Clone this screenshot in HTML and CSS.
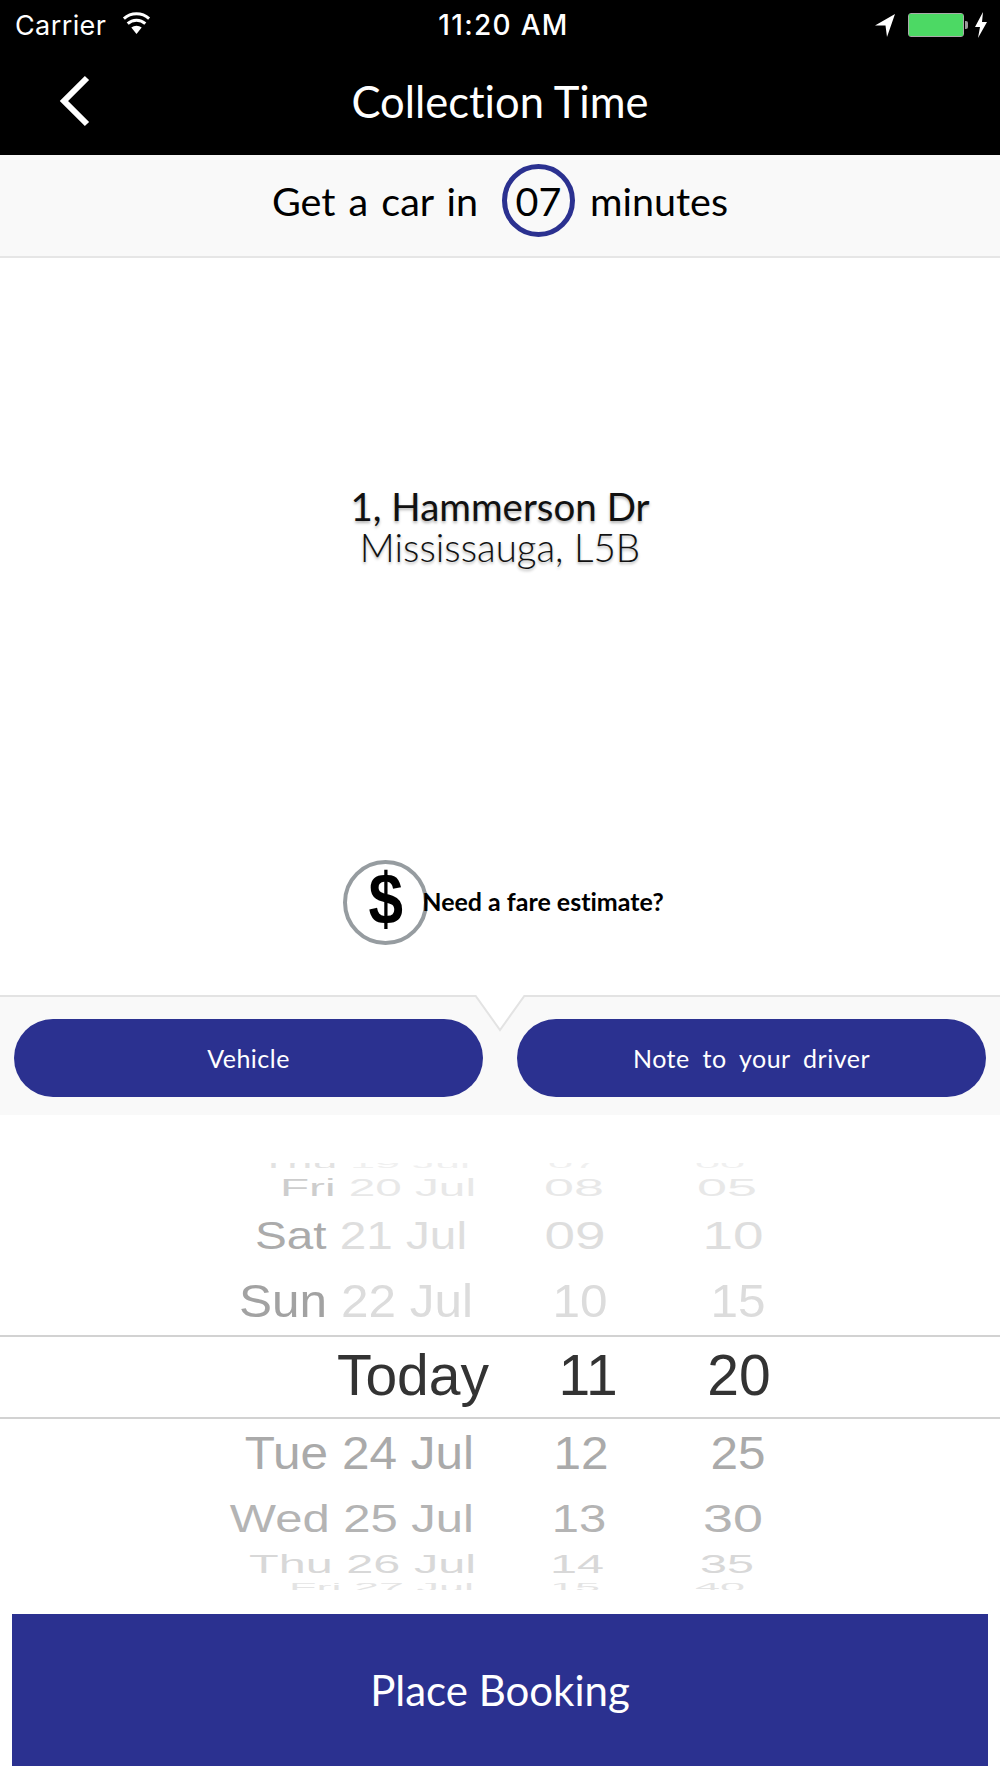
FILE: index.html
```html
<!DOCTYPE html>
<html lang="en">
<head>
    <meta charset="UTF-8">
    <meta name="viewport" content="width=device-width, initial-scale=1.0">
    <title>Collection Time</title>
    <link rel="stylesheet" href="styles.css">
</head>
<body>
    <div class="status-bar">
        <div class="status-left">
            <span class="carrier">Carrier</span>
            <svg class="wifi" width="31" height="24" viewBox="0 0 30 24">
                <path d="M15 23 9.8 16.6a8 8 0 0 1 10.4 0z" fill="#fff"/>
                <path d="M6.2 12.6a13 13 0 0 1 17.6 0" fill="none" stroke="#fff" stroke-width="3"/>
                <path d="M2.4 7.6a19 19 0 0 1 25.2 0" fill="none" stroke="#fff" stroke-width="3"/>
            </svg>
        </div>
        <div class="status-time">11:20 AM</div>
        <div class="status-right">
            <svg width="20" height="24" viewBox="0 0 20 24"><path d="M20 1 0 12.5h10.5L12 24z" fill="#fff"/></svg>
            <div class="battery"><div class="battery-fill"></div></div>
            <svg width="12" height="26" viewBox="0 0 12 26"><path d="M8 0 0 15h5l-2 11 9-16H7z" fill="#fff"/></svg>
        </div>
    </div>

    <header class="nav-bar">
        <svg class="back" width="34" height="52" viewBox="0 0 34 52">
            <path d="M29 3 6 26l23 23" fill="none" stroke="#fff" stroke-width="6"/>
        </svg>
        <h1>Collection Time</h1>
    </header>

    <div class="eta-bar">
        <span>Get a car in</span>
        <span class="eta-circle">07</span>
        <span>minutes</span>
    </div>

    <main class="map-area">
        <div class="address">
            <div class="address-street">1, Hammerson Dr</div>
            <div class="address-city">Mississauga, L5B</div>
        </div>
        <div class="fare">
            <div class="fare-icon"><span>$</span></div>
            <span class="fare-text">Need a fare estimate?</span>
        </div>
    </main>

    <section class="options">
        <svg class="notch" width="52" height="38" viewBox="0 0 52 38">
            <path d="M1 0 26 35 51 0z" fill="#fff"/>
            <path d="M1 0 26 35 51 0" fill="none" stroke="#e3e3e3" stroke-width="2"/>
        </svg>
        <button class="pill-btn">Vehicle</button>
        <button class="pill-btn">Note to your driver</button>
    </section>

    <section class="picker">
        <div class="wheel">
            <div class="row row-a"><span class="date"><b>Thu</b> 19 Jul</span><span class="hour">07</span><span class="min">00</span></div>
            <div class="row row-b"><span class="date"><b>Fri</b> 20 Jul</span><span class="hour">08</span><span class="min">05</span></div>
            <div class="row row-c"><span class="date"><b>Sat</b> 21 Jul</span><span class="hour">09</span><span class="min">10</span></div>
            <div class="row row-d"><span class="date"><b>Sun</b> 22 Jul</span><span class="hour">10</span><span class="min">15</span></div>
            <div class="row row-now"><span class="date">Today</span><span class="hour">11</span><span class="min">20</span></div>
            <div class="row row-e"><span class="date">Tue 24 Jul</span><span class="hour">12</span><span class="min">25</span></div>
            <div class="row row-f"><span class="date">Wed 25 Jul</span><span class="hour">13</span><span class="min">30</span></div>
            <div class="row row-g"><span class="date">Thu 26 Jul</span><span class="hour">14</span><span class="min">35</span></div>
            <div class="row row-h"><span class="date">Fri 27 Jul</span><span class="hour">15</span><span class="min">40</span></div>
        </div>
    </section>

    <div class="booking-wrap">
        <button class="booking-btn">Place Booking</button>
    </div>
</body>
</html>
```

FILE: styles.css
```css
* {
    margin: 0;
    padding: 0;
    box-sizing: border-box;
}

body {
    width: 1000px;
    height: 1778px;
    overflow: hidden;
    background: #fff;
    font-family: "Lato", sans-serif;
    font-variant-ligatures: none;
    display: flex;
    flex-direction: column;
}

.status-bar {
    height: 50px;
    background: #000;
    color: #fff;
    font-family: "Inter", sans-serif;
    font-size: 27px;
    display: grid;
    grid-template-columns: 1fr auto 1fr;
    align-items: center;
    padding: 0 13px 0 15px;
}

.status-left {
    display: flex;
    align-items: center;
    gap: 15px;
}

.carrier {
    letter-spacing: 0.4px;
}

.wifi {
    margin-top: -4px;
}

.status-time {
    margin-left: 5px;
    font-size: 28px;
    font-weight: 500;
    letter-spacing: 1.3px;
}

.status-right {
    display: flex;
    justify-content: flex-end;
    align-items: center;
    gap: 8px;
}

.battery {
    width: 56px;
    height: 24px;
    margin-left: 5px;
    margin-right: 3px;
    border: 1px solid #aaa;
    border-radius: 3px;
    background: #000;
    position: relative;
}

.battery::after {
    content: "";
    position: absolute;
    right: -5px;
    top: 7px;
    width: 3px;
    height: 8px;
    background: #999;
    border-radius: 0 2px 2px 0;
}

.battery-fill {
    height: 100%;
    background: #4cd964;
}

.nav-bar {
    height: 105px;
    background: #000;
    color: #fff;
    display: flex;
    align-items: center;
    justify-content: center;
    position: relative;
}

.nav-bar h1 {
    font-size: 43.5px;
    font-weight: 400;
    margin-bottom: 4px;
}

.back {
    position: absolute;
    left: 58px;
    top: 25px;
}

.eta-bar {
    height: 103px;
    padding-bottom: 10px;
    background: #f9f9f9;
    border-bottom: 2px solid #e6e6e6;
    display: flex;
    align-items: center;
    justify-content: center;
    gap: 15px;
    font-size: 39.5px;
    word-spacing: 3px;
    color: #000;
}

.eta-circle {
    width: 73px;
    height: 73px;
    margin-left: 9px;
    border: 5px solid #2b3190;
    border-radius: 50%;
    display: flex;
    align-items: center;
    justify-content: center;
}

.map-area {
    height: 737px;
    background: #fff;
    display: flex;
    flex-direction: column;
    align-items: center;
    padding-top: 226px;
}

.address {
    text-align: center;
    color: #111;
    text-shadow: 0 2px 3px rgba(0, 0, 0, 0.3);
}

.address-street {
    font-size: 38.5px;
    line-height: 44px;
}

.address-city {
    font-size: 38.5px;
    line-height: 38px;
    font-weight: 300;
}

.fare {
    display: flex;
    align-items: center;
    margin-top: 294px;
    margin-left: 7px;
}

.fare-icon {
    width: 85px;
    height: 85px;
    border: 4px solid #969ca0;
    border-radius: 50%;
    display: flex;
    align-items: center;
    justify-content: center;
    font-family: "Liberation Sans", sans-serif;
    font-size: 62px;
    font-weight: 700;
    color: #000;
}

.fare-icon span {
    transform: translateY(-3px) scaleY(1.15);
}

.fare-text {
    margin-left: -6px;
    margin-top: -4px;
    font-size: 25px;
    font-weight: 700;
    color: #000;
}

.options {
    height: 120px;
    background: #f9f9f9;
    border-top: 2px solid #e3e3e3;
    padding: 22px 14px 0;
    display: grid;
    grid-template-columns: 469px 469px;
    justify-content: space-between;
    align-items: start;
    position: relative;
}

.notch {
    position: absolute;
    left: 474px;
    top: -2px;
}

.pill-btn {
    height: 78px;
    border: none;
    border-radius: 39px;
    background: #2b3190;
    color: #fff;
    font-family: "Lato", sans-serif;
    font-size: 25px;
    letter-spacing: 0.5px;
    word-spacing: 6px;
}

.picker {
    height: 499px;
    padding-top: 48px;
    background: #fff;
}

.wheel {
    height: 427px;
    overflow: hidden;
    font-family: "Liberation Sans", sans-serif;
}

.row {
    display: grid;
    grid-template-rows: 100%;
    align-items: center;
    white-space: nowrap;
    line-height: 1;
}

.row span {
    display: block;
    text-align: center;
}

.row .date {
    margin-right: -2px;
    text-align: right;
    transform-origin: right center;
}

.row b {
    font-weight: 400;
}

.row-a {
    height: 26px;
    margin-top: -13px;
    grid-template-columns: 468px 210px 84px;
    font-size: 45px;
    color: #f0f0f0;
}

.row-a span {
    transform: scaleY(0.3);
}

.row-a b {
    color: #e2e2e2;
}

.row-b {
    height: 24px;
    grid-template-columns: 474px 200px 106px;
    font-size: 47.7px;
    color: #e8e8e8;
}

.row-b span {
    transform: scaleY(0.5);
}

.row-b .hour,
.row-b .min {
    transform: scale(1.13, 0.5);
}

.row-b b {
    color: #cdcdcd;
}

.row-c {
    height: 72px;
    grid-template-columns: 465px 220px 96px;
    font-size: 47.7px;
    color: #dedede;
}

.row-c span {
    transform: scaleY(0.82);
}

.row-c .hour,
.row-c .min {
    transform: scale(1.15, 0.82);
}

.row-c b {
    color: #ababab;
}

.row-d {
    height: 58px;
    margin-bottom: 5px;
    grid-template-columns: 471px 218px 98px;
    font-size: 49.5px;
    color: #dcdcdc;
}

.row-d span {
    transform: scaleY(0.94);
}

.row-d b {
    color: #a2a2a2;
}

.row-now {
    height: 84px;
    padding-bottom: 4px;
    grid-template-columns: 487px 202px 100px;
    font-size: 57px;
    color: #333;
    border-top: 2px solid #d2d2d2;
    border-bottom: 2px solid #d2d2d2;
}

.row-e {
    height: 67px;
    grid-template-columns: 472px 218px 96px;
    font-size: 49.5px;
    color: #aaa;
}

.row-e span {
    transform: scaleY(0.93);
}

.row-f {
    height: 64px;
    grid-template-columns: 472px 214px 94px;
    font-size: 49px;
    color: #b4b4b4;
}

.row-f span {
    transform: scaleY(0.8);
}

.row-f .min {
    transform: scale(1.1, 0.8);
}

.row-g {
    height: 28px;
    grid-template-columns: 474px 206px 94px;
    font-size: 48.6px;
    color: #d8d8d8;
}

.row-g span {
    transform: scaleY(0.52);
}

.row-h {
    height: 18px;
    grid-template-columns: 472px 206px 84px;
    font-size: 45px;
    color: #e4e4e4;
}

.row-h span {
    transform: scaleY(0.25);
}

.booking-wrap {
    padding: 0 12px;
}

.booking-btn {
    width: 100%;
    height: 152px;
    border: none;
    background: #2b3190;
    color: #fff;
    font-family: "Lato", sans-serif;
    font-size: 42px;
}
```
